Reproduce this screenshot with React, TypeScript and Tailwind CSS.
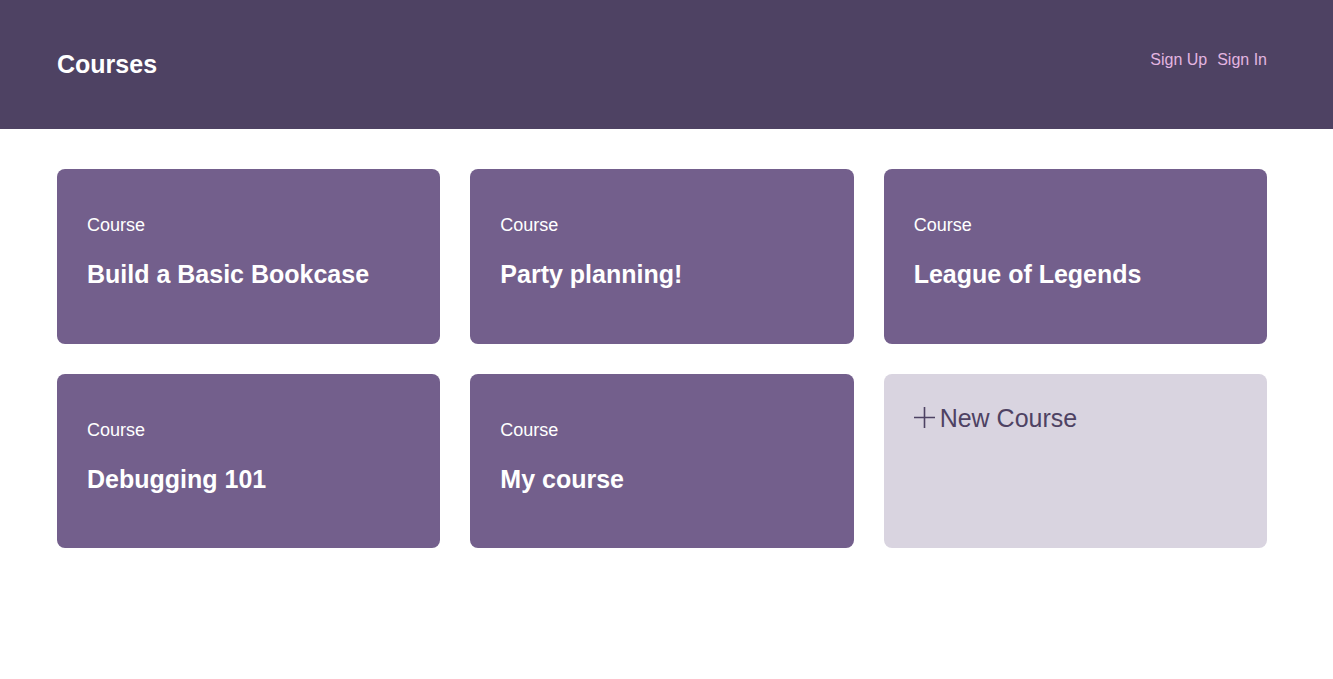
const courses = [
  'Build a Basic Bookcase',
  'Party planning!',
  'League of Legends',
  'Debugging 101',
  'My course',
];

export default function App() {
  return (
    <div className="min-h-screen bg-white font-['Liberation_Sans',Arial,sans-serif]">
      {/* header */}
      <header className="h-[128.5px] bg-[#4e4263] pl-[57px] pr-[66px] flex justify-between">
        <h1 className="text-[25px] leading-[30px] font-bold text-white mt-[49px]">Courses</h1>
        <nav className="flex gap-[10px] mt-[50px] text-[16px] leading-[20px] text-[#e3b5e0]">
          <a href="#">Sign Up</a>
          <a href="#">Sign In</a>
        </nav>
      </header>

      {/* course grid */}
      <main className="pl-[57px] pr-[66px] pt-[40.5px]">
        <div className="grid grid-cols-3 gap-[30px]">
          {courses.map((title) => (
            <CourseCard key={title} title={title} />
          ))}
          <div className="h-[174.5px] rounded-[8px] bg-[#d9d4e0] p-[30px] text-[#4e4263]">
            <div className="flex items-center text-[25px] leading-[28px]">
              <svg width="21" height="21" viewBox="0 0 21 21" className="mr-[5px] -mt-[1px]">
                <path d="M0 10.5H21M10.5 0V21" stroke="currentColor" strokeWidth="1.6" fill="none" />
              </svg>
              <span>New Course</span>
            </div>
          </div>
        </div>
      </main>
    </div>
  );
}

function CourseCard({ title }: { title: string }) {
  return (
    <div className="h-[174.5px] rounded-[8px] bg-[#735f8c] pt-[46px] px-[30px] text-white">
      <p className="text-[18px] leading-[20px]">Course</p>
      <h3 className="mt-[24px] text-[25px] leading-[30px] font-bold">{title}</h3>
    </div>
  );
}
